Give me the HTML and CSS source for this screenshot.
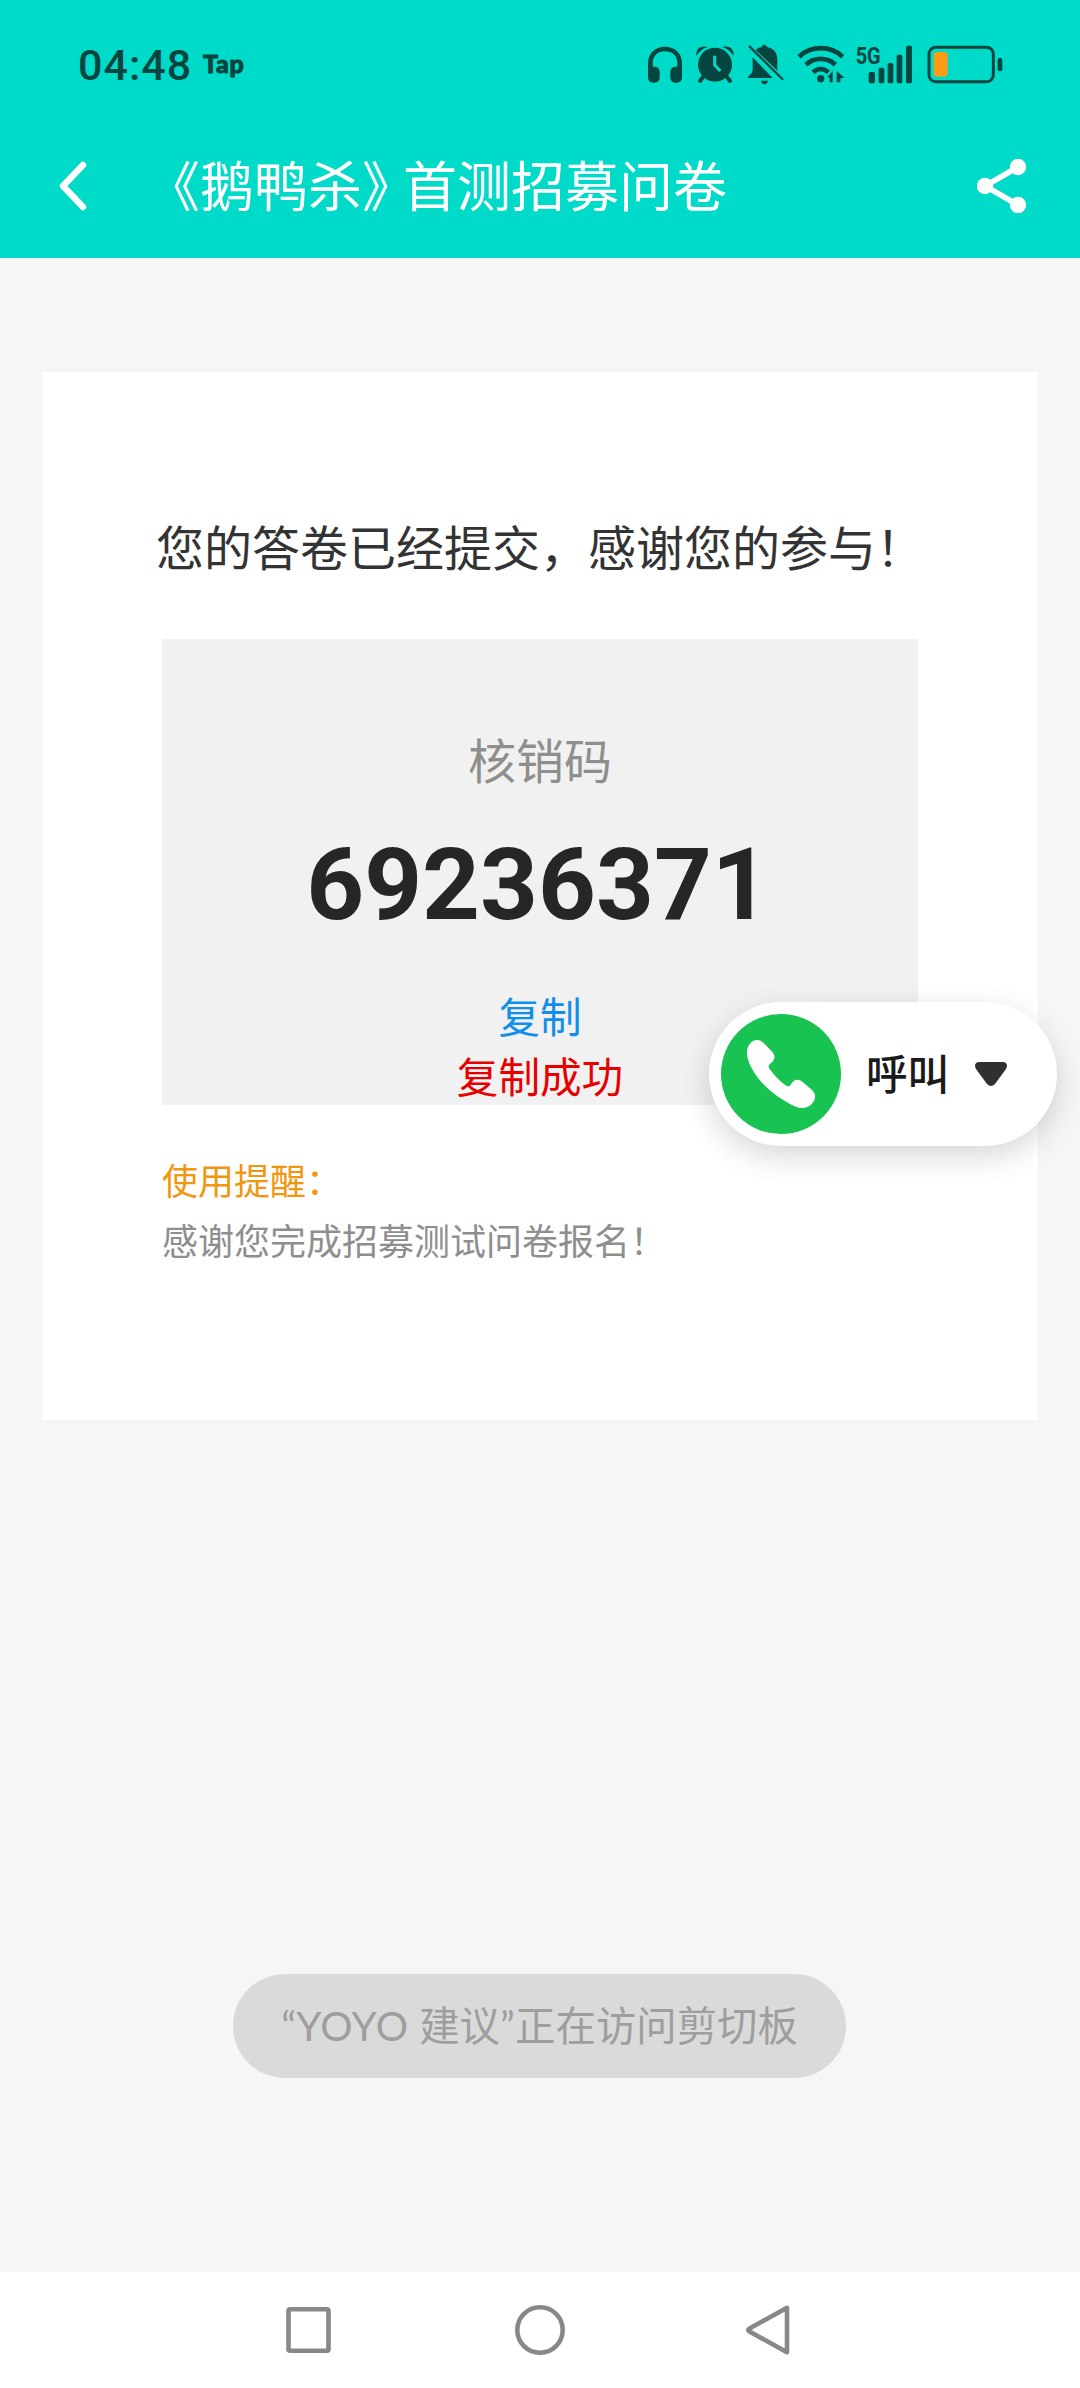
FILE: index.html
```html
<!DOCTYPE html>
<html lang="zh-CN">
<head>
<meta charset="utf-8">
<title>《鹅鸭杀》首测招募问卷</title>
<link rel="stylesheet" href="styles.css">
</head>
<body>
<div class="screen">
  <header class="header">
    <div class="status">
      <span class="time">04:48</span>
      <span class="tap">Tap</span>
      <div class="status-icons">
        <svg class="icon" width="34" height="40" viewBox="84 75 102 120">
          <path d="M91 160V131C91 104 109 87 135 87s44 17 44 44v29" fill="none" stroke="currentColor" stroke-width="14"/>
          <rect x="84" y="140" width="35" height="48" rx="15"/><rect x="151" y="140" width="35" height="48" rx="15"/>
          <path d="M84 135h14v30H84zM172 135h14v30h-14z"/>
        </svg>
        <svg class="icon alarm" width="38" height="40" viewBox="230 75 114 120">
          <circle cx="287" cy="134" r="51"/>
          <path d="M250 172l-8 11M324 172l8 11" stroke="currentColor" stroke-width="12" stroke-linecap="round"/>
          <path d="M232 108c-5-20 12-34 33-27-16 5-26 14-33 27zM342 108c5-20-12-34-33-27 16 5 26 14 33 27z"/>
          <path d="M286 107v28l17 18" fill="none" stroke="#00dac9" stroke-width="9"/>
        </svg>
        <svg class="icon bell" width="36" height="42" viewBox="386 73 108 126">
          <path d="M400 113l60 62h-74c0-8 14-10 14-26zM409 91c5-5 10-7 18-9 2-9 14-9 16 0 20 4 31 16 31 38v33zM425 183h21c-2 14-19 14-21 0z"/>
          <path d="M391 81l98 97" stroke="currentColor" stroke-width="7" stroke-linecap="round"/>
        </svg>
        <svg class="icon wifi" width="48" height="40" viewBox="532 75 144 120">
          <g fill="none" stroke="currentColor" stroke-width="14"><path d="M538 110c37-34 94-34 131 0"/><path d="M559 134c25-23 63-23 88 0"/><path d="M580 157c14-13 32-13 46 0"/></g>
          <circle cx="603" cy="176" r="11"/>
          <path d="M622 172l17-19v34h-9v-15zM651 187v-34l23 20-12 2v12z"/>
        </svg>
        <svg class="icon signal" width="58" height="40" viewBox="706 75 174 120">
          <text class="network" x="708" y="132" textLength="75" lengthAdjust="spacingAndGlyphs">5G</text>
          <rect x="747" y="156" width="19" height="34" rx="5"/><rect x="777" y="143" width="17" height="47" rx="5"/><rect x="804" y="129" width="17" height="61" rx="5"/><rect x="831" y="104" width="17" height="86" rx="5"/><rect x="859" y="77" width="18" height="113" rx="5"/>
        </svg>
        <svg class="icon battery" width="76" height="40" viewBox="922 75 228 120">
          <rect x="928" y="82" width="193" height="103" rx="20" fill="none" stroke="currentColor" stroke-width="9"/>
          <rect x="942" y="96" width="42" height="74" rx="11" fill="#ff9b14"/>
          <rect x="1134" y="114" width="14" height="40" rx="6"/>
        </svg>
      </div>
    </div>
    <div class="titlebar">
      <svg class="back" width="30" height="50" viewBox="0 0 30 50"><path d="M25 4L5 25l20 21" fill="none" stroke="#fff" stroke-width="6.5" stroke-linecap="round" stroke-linejoin="round"/></svg>
      <h1 class="title">《鹅鸭杀<span class="bracket">》</span>首测招募问卷</h1>
      <svg class="share" width="50" height="54" viewBox="0 0 50 54"><path d="M41 8L8 27l33 19" fill="none" stroke="#fff" stroke-width="5.5"/><g fill="#fff"><circle cx="41" cy="8" r="8.2"/><circle cx="8" cy="27" r="8.2"/><circle cx="41" cy="46" r="8.2"/></g></svg>
    </div>
  </header>
  <main class="main">
    <section class="card">
      <h2 class="message">您的答卷已经提交，感谢您的参与！</h2>
      <div class="code-box">
        <p class="code-label">核销码</p>
        <p class="code">69236371</p>
        <p class="copy">复制</p>
        <p class="copied">复制成功</p>
      </div>
      <p class="tip-title">使用提醒：</p>
      <p class="tip">感谢您完成招募测试问卷报名！</p>
    </section>
  </main>
  <nav class="nav">
    <svg width="50" height="54" viewBox="0 0 50 54"><rect x="4.5" y="6.2" width="40" height="41.5" rx="1.5"/></svg>
    <svg width="50" height="54" viewBox="0 0 50 54"><circle cx="25" cy="27" r="22.7"/></svg>
    <svg width="50" height="54" viewBox="0 0 50 54"><path d="M41 4.800L3.500 25.500q-2.600 1.500 0 3l37.500 20.700z" stroke-linejoin="round"/></svg>
  </nav>
  <div class="call">
    <span class="call-icon">
      <svg width="120" height="120" viewBox="93 102 360 360"><path fill="#fff" d="M184 187c12-11 27-9 38 3l25 26c10 12 8 22-3 32-9 7-10 12-5 19 14 20 31 37 50 50 6 3 10 2 15-6 9-14 22-15 34-5l28 24c14 14 11 29-1 42-13 14-30 15-48 8-70-31-132-92-145-150-4-18 0-32 12-43z"/></svg>
    </span>
    <span class="call-text">呼叫</span>
    <svg class="caret" width="32" height="24" viewBox="0 0 32 24"><path d="M4 0h24c4 0 5 4 3 7L20 22q-4 4-8 0L1 7C-1 4 0 0 4 0z" fill="#303030"/></svg>
  </div>
  <div class="toast"><span class="latin">“YOYO </span>建议<span class="latin">”</span>正在访问剪切板</div>
</div>
</body>
</html>
```

FILE: styles.css
```css
* { box-sizing: border-box; }
body, h1, h2, p { margin: 0; }
body { font-family: "Noto Sans CJK SC", sans-serif; font-weight: 400; }
h1, h2 { font-weight: 400; }
.screen {
  position: relative;
  display: flex;
  flex-direction: column;
  width: 1080px;
  height: 2388px;
  background: #f6f6f6;
  overflow: hidden;
}
.header { height: 258px; background: #00dac9; color: #04463f; }
.status { display: flex; align-items: center; height: 130px; padding-left: 78px; }
.time {
  width: 114px;
  font: 500 43px/50px Roboto, sans-serif;
  letter-spacing: 1px;
}
.tap {
  margin: -4px 0 0 11px;
  font: 900 25px/30px Lato, sans-serif;
  -webkit-text-stroke: 1px currentColor;
  letter-spacing: .6px;
}
.status-icons { display: flex; align-items: center; margin-left: auto; margin-right: 77px; }
.icon { fill: currentColor; overflow: visible; }
.alarm { margin-left: 14.7px; }
.bell { margin-left: 14px; }
.wifi { margin-left: 12.6px; }
.signal { margin-left: 10px; }
.battery { margin-left: 14px; }
.network { font: 700 72px Roboto, sans-serif; }
.titlebar { display: flex; align-items: center; height: 112px; padding: 0 53px 0 58px; }
.title {
  margin: -4px 0 0 58px;
  font-size: 54px;
  line-height: 80px;
  color: #fff;
  white-space: nowrap;
}
.bracket { margin-right: -13px; }
.share { margin-left: auto; }
.main { flex: 1; padding: 114px 42px 0; }
.card { height: 1048px; padding: 138px 120px 0; background: #fff; }
.message { margin: 0 -20px; font-size: 48px; line-height: 70px; text-align: center; white-space: nowrap; color: #333; }
.code-box { height: 466px; margin-top: 59px; padding-top: 84px; background: #f1f1f1; text-align: center; overflow: hidden; }
.code-label { font-size: 48px; line-height: 70px; color: #8e8e8e; }
.code { margin-top: 42px; padding-right: 4px; font: 700 101px/100px Roboto, sans-serif; color: #262626; }
.copy, .copied { font-size: 41.6px; line-height: 60px; }
.copy { margin-top: 50px; color: #108ee9; }
.copied { color: #e60000; }
.tip-title, .tip { font-size: 36px; line-height: 60px; }
.tip-title { margin-top: 44px; color: #f0960f; }
.tip { color: #8e8e8e; }
.nav { display: flex; justify-content: center; align-items: center; gap: 181px; height: 116px; background: #fff; }
.nav svg { fill: none; stroke: #888; stroke-width: 4.6; }
.call {
  position: absolute;
  left: 709px;
  top: 1002px;
  display: flex;
  align-items: center;
  width: 348px;
  height: 144px;
  padding-left: 12px;
  border-radius: 72px;
  background: #fff;
  box-shadow: 0 10px 30px rgba(0, 0, 0, .16);
}
.call-icon { display: flex; width: 120px; height: 120px; border-radius: 50%; background: #19c351; }
.call-text { margin: -4px 0 0 25px; font-size: 41.6px; font-weight: 500; line-height: 60px; color: #1a1a1a; }
.caret { margin-left: 26px; }
.toast {
  position: absolute;
  left: 233px;
  top: 1974px;
  width: 613px;
  height: 104px;
  border-radius: 52px;
  background: #dadada;
  color: #9e9e9e;
  font-size: 40.4px;
  line-height: 99px;
  text-align: center;
  white-space: pre;
}
.latin { font-family: Lato, sans-serif; letter-spacing: .4px; }
```
